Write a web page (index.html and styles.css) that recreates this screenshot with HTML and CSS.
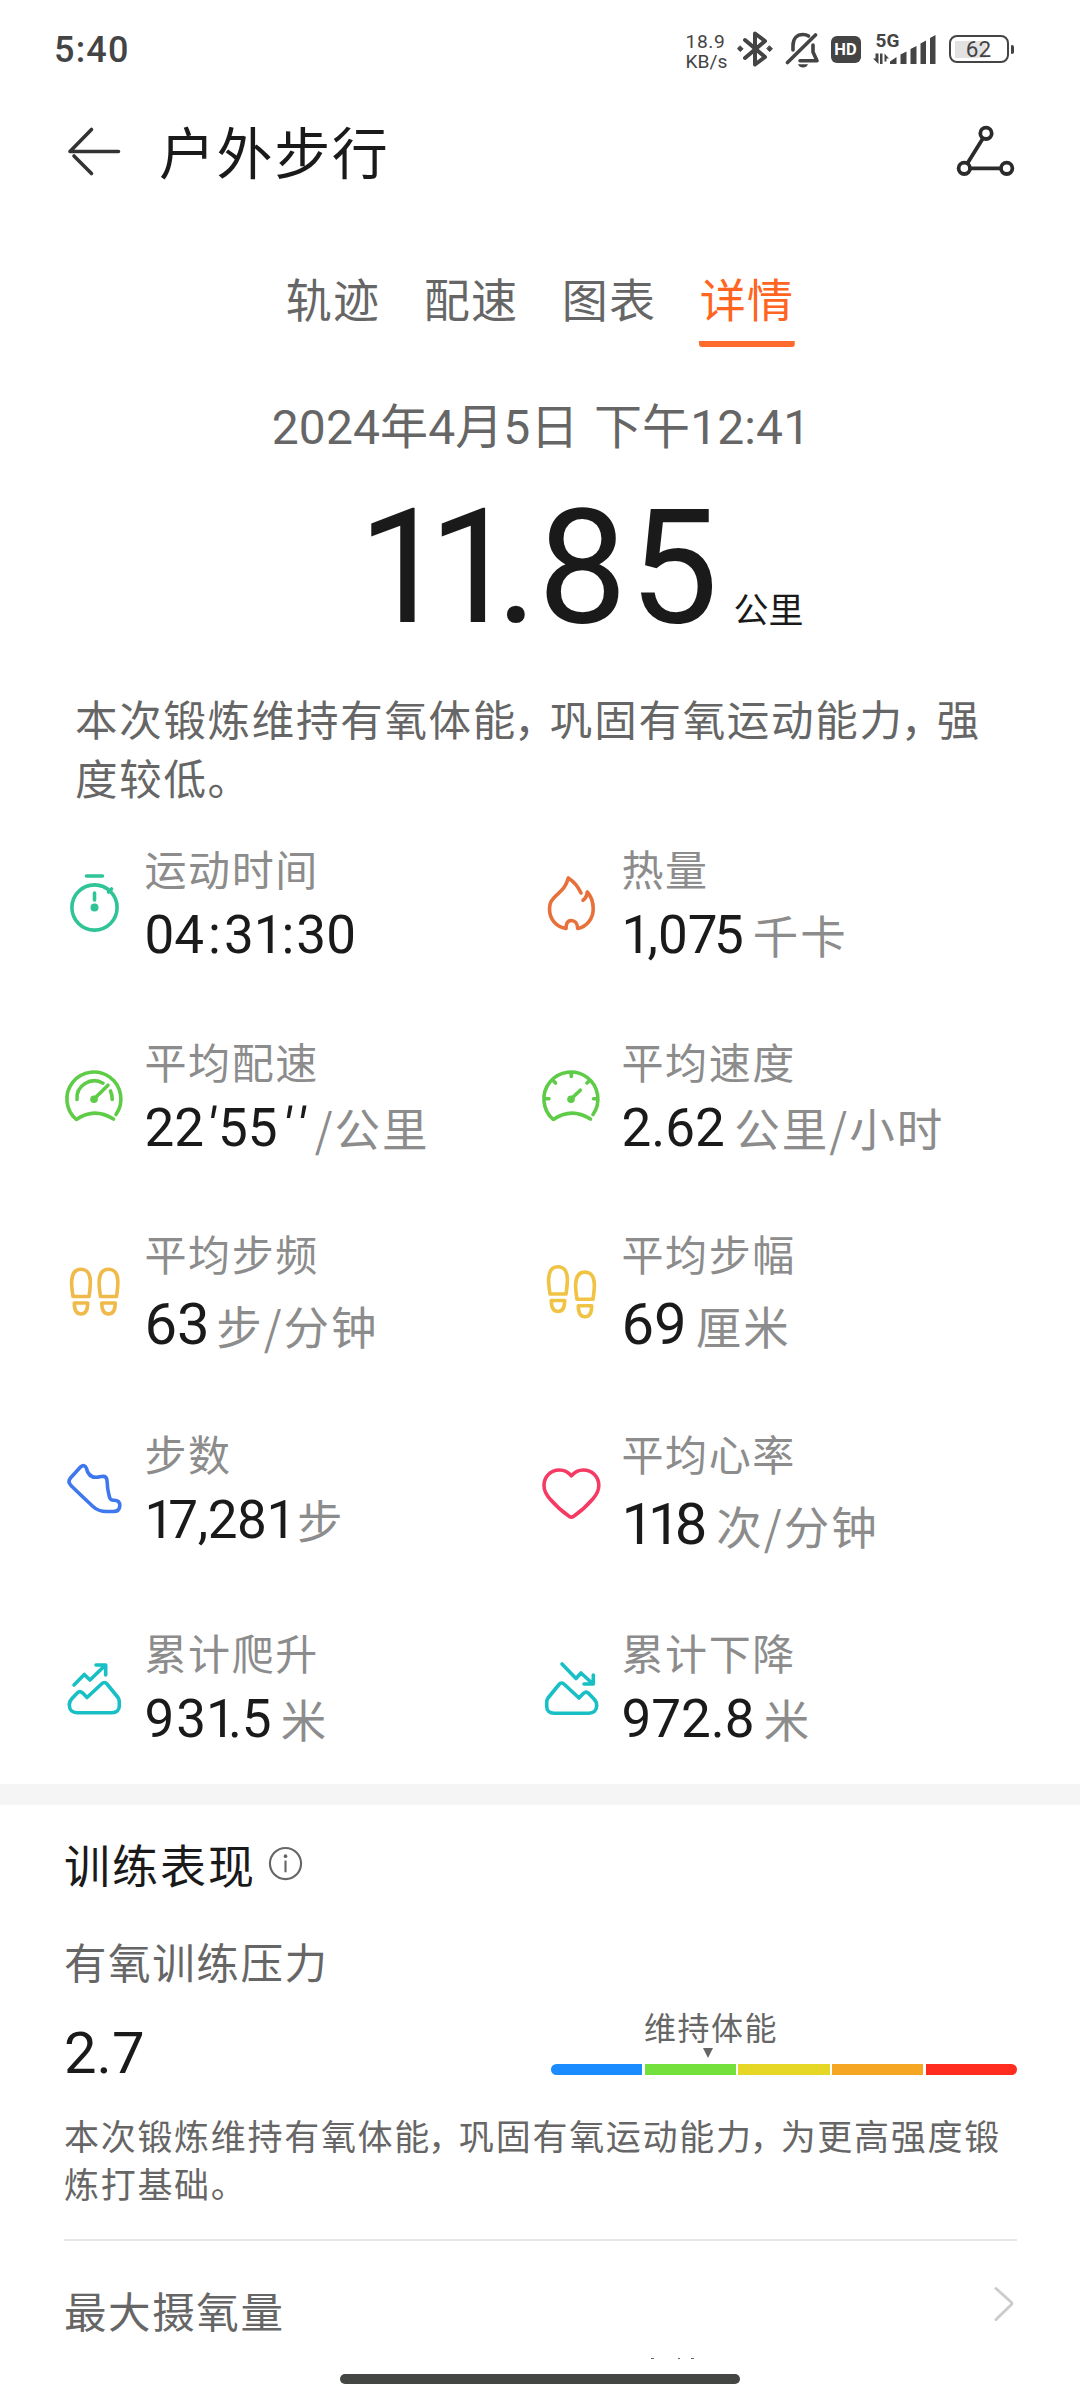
FILE: index.html
```html
<!DOCTYPE html>
<html lang="zh-CN">
<head>
<meta charset="utf-8">
<title>户外步行</title>
<link rel="stylesheet" href="styles.css">
</head>
<body>
<div class="screen">
  <div class="statusbar">
    <span class="clock">5:40</span>
    <div class="indicators">
      <div class="netspeed"><span class="rate">18.9</span><span>KB/s</span></div>
      <svg class="ind-bt" width="36" height="40" viewBox="0 0 36 40" fill="none" stroke="#444" stroke-width="4" stroke-linejoin="round" stroke-linecap="round"><path d="M8 11L28 28L18 35.500V4.500L28 12L8 29"/><path d="M3.300 17L6 19.800L3.300 22.600L.6 19.800ZM32.700 17L35.400 19.800L32.700 22.600L30 19.800Z" fill="#444" stroke-width="1"/></svg>
      <svg class="ind-bell" width="36" height="40" viewBox="0 0 36 40" fill="none" stroke="#444" stroke-width="3.600" stroke-linecap="round" stroke-linejoin="round"><path d="M2.500 33.500L30.500 6"/><path d="M8 21V16.500C8 9.500 12 5.500 18 5.500C20 5.500 22 6 23.500 7"/><path d="M28 16V23L32 31.700H15"/><path d="M13 35.300H23C22 37.500 20.500 38.500 18 38.500S14 37.500 13 35.300Z" fill="#444" stroke="none"/></svg>
      <span class="hd">HD</span>
      <div class="signal">
        <span class="gen">5G</span>
        <svg width="66" height="32" viewBox="0 0 66 32" fill="#444"><path d="M3.500 21.500H6.500V32L1 26.500H3.500ZM8 21.500H10.500V32H8ZM12.500 21.500L17 26.500H14.500V29.500H12.500Z"/><path d="M18 32V29.500L24.500 25V32ZM28.500 32V22.500L34.500 19.500V32ZM38.500 32V17L44.500 14V32ZM48.500 32V11.500L54 8.500V32ZM58 32V6L63.500 3V32Z"/></svg>
      </div>
      <div class="battery"><span class="battery-body">62</span><span class="battery-cap"></span></div>
    </div>
  </div>

  <div class="header">
    <svg width="56" height="56" viewBox="0 0 56 56" fill="none" stroke="#333" stroke-width="3.600" stroke-linecap="round" stroke-linejoin="round"><path d="M53.500 28.500H5L26.500 6.500M9 33L26.500 50.500"/></svg>
    <h1 class="title">户外步行</h1>
    <svg class="share" width="60" height="60" viewBox="0 0 60 60" fill="none" stroke="#2b2b2b" stroke-width="3.800"><circle cx="31" cy="12.300" r="5.700"/><circle cx="9.300" cy="47.300" r="5.700"/><circle cx="51.700" cy="47.300" r="5.700"/><path d="M28 17.200L12.300 42.400M15 47.300H46"/></svg>
  </div>

  <div class="tabs">
    <span class="tab">轨迹</span>
    <span class="tab">配速</span>
    <span class="tab">图表</span>
    <span class="tab active">详情</span>
  </div>

  <div class="date">2024年4月5日 下午12:41</div>
  <div class="distance"><span class="n1">1</span><span class="n2">1</span>.<span class="n3">8</span>5<span class="distance-unit">公里</span></div>

  <p class="summary">本次锻炼维持有氧体能<span class="comma">，</span>巩固有氧运动能力<span class="comma">，</span>强<br>度较低。</p>

  <div class="metrics">
    <div class="metric">
      <svg class="icon teal" viewBox="0 0 64 64"><circle cx="32.500" cy="35.500" r="22.600"/><path d="M24.500 4H40.500M46.500 20L49.500 17M32.500 21V28"/><circle class="dot" cx="32.500" cy="35.500" r="4"/></svg>
      <div class="info"><div class="label">运动时间</div><div class="value">04<span class="colon-a">:</span>31<span class="colon-b">:</span>30</div></div>
    </div>
    <div class="metric">
      <svg class="icon orange" viewBox="0 0 64 64"><path d="M42 21C39 14.500 34 9 29.300 6C27 14 24.500 17 19 21.800C12 28 10.500 31 10.500 37C10.500 47 17 55 27 56.500C27 51 29 48.500 32.300 48.500S38.500 51 38.700 56.500C48 54.500 54.200 46.500 54.200 37C54.200 30 52 24 48.300 20C48 23.500 46.500 26.500 44 28.300"/></svg>
      <div class="info"><div class="label">热量</div><div class="value"><span class="tight">1</span>,0<span class="tight">7</span>5<span class="unit">千卡</span></div></div>
    </div>
    <div class="metric">
      <svg class="icon green" viewBox="0 0 64 64"><path d="M54 49.500A27 27 0 1 0 14.300 54.500Q32.300 42 51.500 54M15 34.500A17.300 17.300 0 0 1 41 18.200M48.500 26C49.700 28.500 50.200 31 50.200 34.500M32 34L46 20.200"/><circle class="dot" cx="32" cy="34.300" r="3.800"/></svg>
      <div class="info"><div class="label">平均配速</div><div class="value pace">22<span class="prime">′</span>55<span class="prime seconds">′</span><span class="prime">′</span><span class="unit">/公里</span></div></div>
    </div>
    <div class="metric">
      <svg class="icon green" viewBox="0 0 64 64"><path d="M54 49.500A27 27 0 1 0 14.300 54.500Q32.300 42 51.500 54M7 33.800H10M54.500 33.800H57.500M32.300 8V11.500M14 15.500L16.500 18M50.600 15.500L48 18M32 34L41.300 25.200"/><circle class="dot" cx="32" cy="34.300" r="3.800"/></svg>
      <div class="info"><div class="label">平均速度</div><div class="value roomy">2.62<span class="unit">公里/小时</span></div></div>
    </div>
    <div class="metric">
      <svg class="icon amber" viewBox="0 0 64 64"><path d="M11 39.500C10 33 9.300 28 9.700 23.500C10.200 16.500 13.500 12.300 19 12.300S28 16.500 28.300 23.500C28.500 28 28 33 27 39.500Z"/><path d="M12.300 46H25.700C25.700 53.500 23.500 57 19 57S12.300 53.500 12.300 46Z"/><path d="M38.500 39.500C37.500 33 36.800 28 37.200 23.500C37.700 16.500 41 12.300 46.500 12.300S55.500 16.500 55.800 23.500C56 28 55.500 33 54.500 39.500Z"/><path d="M39.800 46H53.200C53.200 53.500 51 57 46.500 57S39.800 53.500 39.800 46Z"/></svg>
      <div class="info"><div class="label">平均步频</div><div class="value big snug">63<span class="unit">步/分钟</span></div></div>
    </div>
    <div class="metric">
      <svg class="icon yellow" viewBox="0 0 64 64"><g transform="translate(0 -2.500)"><path d="M11 39.500C10 33 9.300 28 9.700 23.500C10.200 16.500 13.500 12.300 19 12.300S28 16.500 28.300 23.500C28.500 28 28 33 27 39.500Z"/><path d="M12.300 46H25.700C25.700 53.500 23.500 57 19 57S12.300 53.500 12.300 46Z"/></g><g transform="translate(-.5 2.800)"><path d="M38.500 39.500C37.500 33 36.800 28 37.200 23.500C37.700 16.500 41 12.300 46.500 12.300S55.500 16.500 55.800 23.500C56 28 55.500 33 54.500 39.500Z"/><path d="M39.800 46H53.200C53.200 53.500 51 57 46.500 57S39.800 53.500 39.800 46Z"/></g></svg>
      <div class="info"><div class="label">平均步幅</div><div class="value big">69<span class="unit">厘米</span></div></div>
    </div>
    <div class="metric">
      <svg class="icon blue" viewBox="0 0 64 64"><path d="M18.700 9.800C21 7.800 23.500 8.500 24.300 11C25.500 16.500 29 20.500 34.500 20.300C37 20.200 38.500 19.300 41 19.200C43.500 19.200 44.800 20.500 45 23.500C45.300 31 46 35 47.300 39.500C48 42.500 49 43.300 52 43.200C56 43.200 58 45 57.800 49C57.500 52.500 55.500 54.500 51.500 54.500H44.500C38.500 54.500 35 53.300 31 49.500C23 42 16 35.500 9 28.500C6.500 26 6.500 23.300 8.700 20.800Z"/></svg>
      <div class="info"><div class="label">步数</div><div class="value steps"><span class="tighter">1</span>7,281<span class="unit">步</span></div></div>
    </div>
    <div class="metric">
      <svg class="icon red" viewBox="0 0 64 64"><path d="M32.400 18.800C28.500 14.300 24.500 13 20.500 13C11.500 13 5 20 5 28.500C5 34 7.500 38 11 42C17 49 24 55 30.400 59.500C31.800 60.500 33 60.500 34.400 59.500C40.800 55 47.800 49 53.800 42C57.300 38 59.800 34 59.800 28.500C59.800 20 53.300 13 44.300 13C40.300 13 36.300 14.300 32.400 18.800Z"/></svg>
      <div class="info"><div class="label">平均心率</div><div class="value big"><span class="tighter">11</span>8<span class="unit">次/分钟</span></div></div>
    </div>
    <div class="metric">
      <svg class="icon cyan" viewBox="0 0 64 64"><path d="M12 29L22.300 18.500L28 24L43 9.500M34 9H43.700V19M15 56.700H50C54.500 56.700 57.300 54 57.300 50V46C57.300 44 57 43 56 41.500L45 28C43.500 26 41.500 26 39.500 28L25 41.500L20.500 36.800C18.500 35 17 35.200 15.500 36.800L10 42.500C8 44.500 7.300 46 7.300 49C7.300 54 10.500 56.700 15 56.700Z"/></svg>
      <div class="info"><div class="label">累计爬升</div><div class="value"><span class="loose">9</span>3<span class="tightest">1</span>.5<span class="unit">米</span></div></div>
    </div>
    <div class="metric">
      <svg class="icon cyan" viewBox="0 0 64 64"><path d="M23 8L37 22.500L42 17L53.500 27.500M45 28H54.300V19M50 57.200H15C10.500 57.200 7.700 54.500 7.700 50.500V46.500C7.700 44.500 8 43.500 9 42L20 28.500C21.500 26.500 23.500 26.500 25.500 28.500L40 42L44.500 37.300C46.500 35.500 48 35.700 49.500 37.300L55 43C57 45 57.700 46.500 57.700 49.500C57.700 54.500 54.500 57.200 50 57.200Z"/></svg>
      <div class="info"><div class="label">累计下降</div><div class="value">972.8<span class="unit">米</span></div></div>
    </div>
  </div>

  <div class="training">
    <div class="section-title">训练表现<svg width="35" height="35" viewBox="0 0 36 36" fill="none" stroke="#666" stroke-width="2.200"><circle cx="18" cy="18" r="16"/><path d="M18 15V27"/><circle cx="18" cy="10.500" r="1.900" fill="#666" stroke="none"/></svg></div>
    <div class="sub">有氧训练压力</div>
    <div class="score-row">
      <div class="score">2.7</div>
      <div class="scale">
        <div class="scale-label">维持体能</div>
        <svg class="pointer" width="10" height="10" viewBox="0 0 10 10"><path d="M0 0H10L5 10Z" fill="#666"/></svg>
        <div class="bar"><span class="s1"></span><span class="s2"></span><span class="s3"></span><span class="s4"></span><span class="s5"></span></div>
      </div>
    </div>
    <p class="desc">本次锻炼维持有氧体能<span class="comma">，</span>巩固有氧运动能力<span class="comma">，</span>为更高强度锻<br>炼打基础。</p>
    <div class="vo2">
      <span class="sub">最大摄氧量</span>
      <svg width="22" height="36" viewBox="0 0 22 36" fill="none" stroke="#ccc" stroke-width="3" stroke-linecap="round" stroke-linejoin="round"><path d="M2 2.500L17 16Q18.500 17.500 17 19L2 33.500"/></svg>
    </div>
    <svg class="peek" width="46" height="3" viewBox="0 0 46 3" fill="#666"><path d="M1 1H4V2H1ZM28 1H30V2H28ZM41 1H44V2H41Z"/></svg>
  </div>
  <div class="homebar"></div>
</div>
</body>
</html>
```
FILE: styles.css
```css
* { box-sizing: border-box; margin: 0; padding: 0; }
body {
  background: #fff;
  font-family: "Noto Sans CJK SC", sans-serif;
  color: #1a1a1a;
}
.screen {
  position: relative;
  width: 1080px;
  height: 2400px;
  overflow: hidden;
  background: #fff;
}
svg { display: block; flex: none; }

/* Status bar */
.statusbar {
  display: flex;
  justify-content: space-between;
  height: 100px;
  padding: 0 66px 0 54px;
  font-family: Roboto, sans-serif;
  color: #444;
}
.clock { font-size: 36px; font-weight: 500; line-height: 101px; letter-spacing: 1.200px; }
.indicators { display: flex; align-items: flex-start; }
.netspeed {
  display: flex;
  flex-direction: column;
  width: 51px;
  padding-top: 32px;
  font-size: 19.200px;
  line-height: 19.500px;
}
.rate { letter-spacing: .6px; }
.ind-bt { margin-top: 29px; }
.ind-bell { margin: 29px 0 0 12px; }
.hd {
  width: 30px;
  height: 27px;
  margin: 36px 0 0 10px;
  border-radius: 6px;
  background: #444;
  color: #fff;
  font-size: 16.500px;
  font-weight: 700;
  line-height: 28px;
  text-align: center;
}
.signal { position: relative; width: 66px; margin: 32px 0 0 11px; }
.gen { position: absolute; left: 4px; top: 0; font-size: 19px; font-weight: 700; line-height: 18px; }
.battery { display: flex; align-items: center; margin: 35px 0 0 11px; gap: 2px; }
.battery-body {
  width: 60px;
  height: 28px;
  border: 2.500px solid #444;
  border-radius: 8px;
  background: linear-gradient(90deg, #e2e2e2, #e2e2e2) 4px center / 31px 17px no-repeat;
  font-size: 22.500px;
  line-height: 25px;
  text-align: center;
}
.battery-cap { width: 3.500px; height: 9px; border-radius: 1px 2px 2px 1px; background: #444; }

/* Header */
.header { display: flex; align-items: center; height: 102px; padding: 0 65px; }
.title { margin: -2px 0 0 38px; font-size: 56px; font-weight: 400; line-height: 66px; letter-spacing: 1.600px; }
.share { margin-left: auto; }

/* Tabs */
.tabs { display: flex; justify-content: center; gap: 42.500px; margin-top: 70px; height: 75px; }
.tab {
  width: 95.500px;
  height: 75px;
  border-radius: 3px;
  color: #666;
  font-size: 46px;
  line-height: 50px;
  letter-spacing: 1.200px;
  text-align: center;
}
.active { color: #ff6420; background: linear-gradient(#ff6b2d, #ff6b2d) bottom / 100% 6px no-repeat; }

.date {
  margin-top: 50px;
  padding-left: 2px;
  color: #666;
  font-family: Roboto, "Noto Sans CJK SC", sans-serif;
  font-size: 48px;
  line-height: 61px;
  letter-spacing: .1px;
  word-spacing: 3.500px;
  text-align: center;
}
.distance {
  height: 160px;
  margin-top: 30px;
  padding-left: 358px;
  font-family: Roboto, sans-serif;
  font-size: 159px;
  line-height: 160px;
  white-space: nowrap;
}
.n1 { letter-spacing: -19px; }
.n2 { letter-spacing: -22px; }
.n3 { letter-spacing: 2px; }
.distance-unit {
  margin-left: 15px;
  font-family: "Noto Sans CJK SC", sans-serif;
  font-size: 35px;
  line-height: 0;
  vertical-align: -1px;
}

.summary {
  margin-top: 40px;
  padding-left: 75px;
  height: 119px;
  color: #666;
  font-size: 42.500px;
  line-height: 59.300px;
  letter-spacing: 1.700px;
  white-space: nowrap;
}
.summary .comma { margin-left: -3px; letter-spacing: -6.500px; }

/* Metrics */
.metrics {
  display: grid;
  grid-template-columns: 477px 477px;
  grid-template-rows: 192.500px 192.500px 199.500px 199.500px 155px;
  margin-top: 38px;
  padding-left: 62px;
}
.metric { display: flex; }
.icon {
  width: 64px;
  height: 64px;
  margin: 27px 18.500px 0 0;
  fill: none;
  stroke: currentColor;
  stroke-width: 3.600px;
  stroke-linecap: round;
  stroke-linejoin: round;
}
.dot { fill: currentColor; stroke: none; }
.teal { color: #2ec496; }
.orange { color: #e8703a; }
.green { color: #5fcc48; }
.amber { color: #f0ba4b; }
.yellow { color: #f0c345; }
.blue { color: #3f78ee; }
.red { color: #f53b64; }
.cyan { color: #18bfc4; }
.label { color: #8c8c8c; font-size: 42px; line-height: 46px; letter-spacing: 1.600px; }
.value {
  margin-top: 14px;
  font-family: Roboto, sans-serif;
  font-size: 53px;
  line-height: 60px;
  white-space: nowrap;
}
.big { font-size: 58px; line-height: 68px; }
.unit {
  margin-left: 9px;
  color: #8c8c8c;
  font-family: "Noto Sans CJK SC", sans-serif;
  font-size: 45.500px;
  line-height: 0;
  letter-spacing: 2px;
  vertical-align: -1px;
}
.loose { letter-spacing: 2px; }
.tight { letter-spacing: -3.700px; }
.tighter { letter-spacing: -6px; }
.tightest { letter-spacing: -8px; }
.colon-a { margin: 0 3px 0 4px; }
.colon-b { margin: 0 2px 0 -2px; }
.prime { display: inline-block; width: 14px; font-style: italic; text-align: center; line-height: 1; }
.seconds { margin-left: 2px; }
.pace .unit { margin-left: 7px; }
.roomy .unit { margin-left: 9.500px; }
.snug .unit { margin-left: 6.500px; }
.steps .unit { margin-left: 1px; }
.steps { letter-spacing: -.4px; }

/* Training */
.training {
  height: 616px;
  padding: 28px 63px 0 64px;
  border-top: 21px solid #f5f5f5;
}
.section-title {
  display: flex;
  align-items: center;
  gap: 12px;
  font-size: 46px;
  line-height: 60px;
  letter-spacing: 2px;
}
.sub { color: #666; font-size: 42.500px; line-height: 50px; letter-spacing: 1.600px; }
.section-title + .sub { margin-top: 43px; }
.score-row { display: flex; justify-content: space-between; height: 81px; margin-top: 22px; }
.score { padding-top: 10px; font-family: Roboto, sans-serif; font-size: 58px; line-height: 70px; }
.scale { width: 466px; }
.scale-label { margin-left: 93px; color: #666; font-size: 32px; line-height: 36px; letter-spacing: 1.500px; }
.pointer { margin: 4px 0 6px 152px; }
.bar { display: flex; gap: 2.500px; height: 10.500px; }
.bar span { flex: 1; }
.s1 { background: #1a8cff; border-radius: 6px 0 0 6px; }
.s2 { background: #73e03c; }
.s3 { background: #e6d626; }
.s4 { background: #f5a623; }
.s5 { background: #ff2d1f; border-radius: 0 6px 6px 0; }
.desc {
  margin-top: 22px;
  padding-bottom: 32px;
  border-bottom: 2px solid #e6e6e6;
  color: #666;
  font-size: 35px;
  line-height: 48px;
  letter-spacing: 1.700px;
  white-space: nowrap;
}
.desc .comma { margin-left: -3px; letter-spacing: -4px; }
.vo2 { display: flex; justify-content: space-between; margin-top: 44px; }
.vo2 svg { margin: 1px 1px 0 0; }
.peek { margin: 22px 0 0 586px; }
.homebar {
  position: absolute;
  left: 340px;
  bottom: 16px;
  width: 400px;
  height: 10px;
  border-radius: 5px;
  background: #444643;
}
```
